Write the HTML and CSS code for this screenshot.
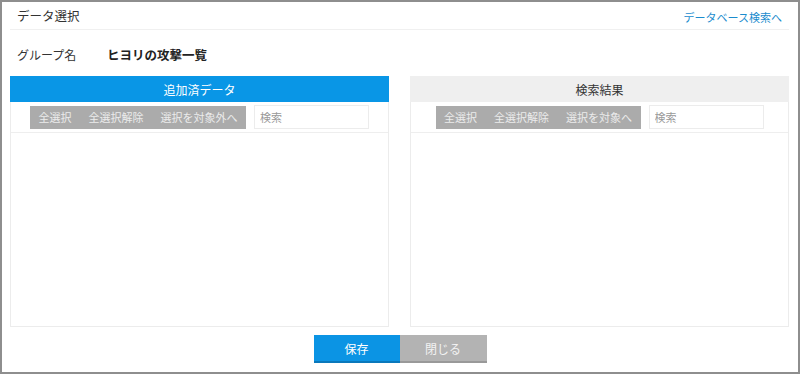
FILE: index.html
```html
<!DOCTYPE html>
<html lang="ja">
<head>
<meta charset="utf-8">
<title>データ選択</title>
<link rel="stylesheet" href="styles.css">
</head>
<body>
<div class="dialog">
  <div class="dialog-header">
    <span class="dialog-title">データ選択</span>
    <a class="db-link" href="#">データベース検索へ</a>
  </div>
  <div class="group-row">
    <span class="group-label">グループ名</span>
    <span class="group-name">ヒヨリの攻撃一覧</span>
  </div>
  <div class="panels">
    <div class="panel">
      <div class="panel-head panel-head-blue">追加済データ</div>
      <div class="toolbar">
        <div class="btn-group">
          <span class="tbtn">全選択</span>
          <span class="tbtn">全選択解除</span>
          <span class="tbtn">選択を対象外へ</span>
        </div>
        <input class="search" type="text" placeholder="検索">
      </div>
      <div class="panel-body"></div>
    </div>
    <div class="panel">
      <div class="panel-head panel-head-gray">検索結果</div>
      <div class="toolbar">
        <div class="btn-group">
          <span class="tbtn">全選択</span>
          <span class="tbtn">全選択解除</span>
          <span class="tbtn">選択を対象へ</span>
        </div>
        <input class="search" type="text" placeholder="検索">
      </div>
      <div class="panel-body"></div>
    </div>
  </div>
  <div class="footer">
    <span class="fbtn fbtn-save">保存</span>
    <span class="fbtn fbtn-close">閉じる</span>
  </div>
</div>
</body>
</html>
```

FILE: styles.css
```css
* { box-sizing: border-box; }
html, body { margin: 0; padding: 0; background: #fff; }
body {
  font-family: "Noto Sans CJK JP", "Noto Sans", sans-serif;
  color: #333;
}
.dialog {
  width: 800px;
  height: 374px;
  border: 2px solid #8e8e8e;
  padding: 0 9px 0 8px;
  display: flex;
  flex-direction: column;
}
.dialog-header {
  height: 28px;
  border-bottom: 1px solid #f0f0f0;
  display: flex;
  align-items: center;
  justify-content: space-between;
  padding: 0 7px;
}
.dialog-title { font-size: 12.5px; color: #333; }
.db-link { font-size: 11px; color: #1b8cce; text-decoration: none; padding-top: 2px; }
.group-row {
  height: 46px;
  display: flex;
  align-items: center;
  padding: 2px 7px 0;
}
.group-label { width: 90px; font-size: 12px; color: #333; }
.group-name { font-size: 12.5px; font-weight: bold; color: #222; }
.panels {
  display: flex;
  gap: 21px;
  height: 251px;
}
.panel {
  flex: 1;
  border: 1px solid #ececec;
  display: flex;
  flex-direction: column;
}
.panel-head {
  height: 26px;
  margin: -1px -1px 0;
  display: flex;
  align-items: center;
  justify-content: center;
  font-size: 12px;
}
.panel-head-blue { background: #0996e6; color: #fff; }
.panel-head-gray { background: #efefef; color: #333; }
.toolbar {
  height: 31px;
  border-bottom: 1px solid #eeeeee;
  display: flex;
  align-items: center;
  justify-content: center;
  gap: 8px;
}
.btn-group { display: flex; height: 23px; background: #ababab; }
.tbtn {
  display: flex;
  align-items: center;
  padding: 0 8.5px;
  font-size: 11px;
  color: #ececec;
}
.search {
  width: 115px;
  height: 24px;
  border: 1px solid #ececec;
  padding: 0 5px;
  font-family: inherit;
  font-size: 11px;
  outline: none;
}
.search::placeholder { color: #999; }
.panel-body { flex: 1; }
.footer {
  display: flex;
  justify-content: center;
  margin-top: 8px;
  padding-left: 1px;
}
.fbtn {
  width: 86px;
  height: 28px;
  display: flex;
  align-items: center;
  justify-content: center;
  font-size: 12px;
  color: #fff;
}
.fbtn-save { background: #0b94e4; border-bottom: 2px solid #0a78bb; }
.fbtn-close { width: 87px; background: #b3b3b3; color: #f2f2f2; border-bottom: 2px solid #999; }
```
